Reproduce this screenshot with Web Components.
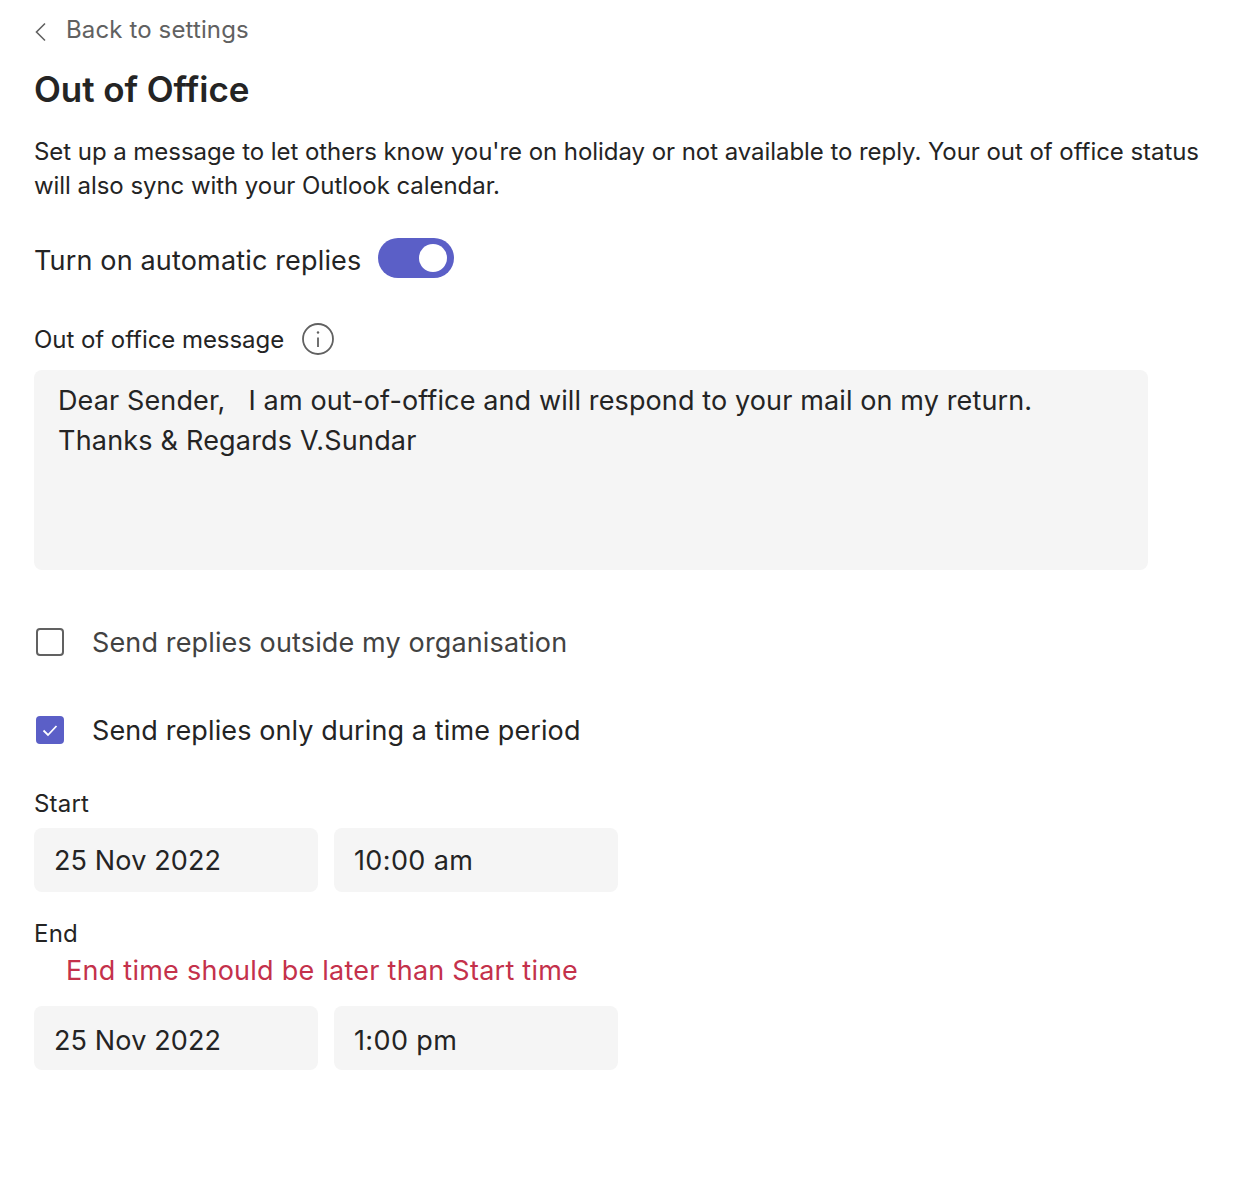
<!DOCTYPE html>
<html lang="en">
<head>
<meta charset="utf-8">
<title>Out of Office</title>
<style>
    html, body {
        margin: 0;
        padding: 0;
        background: #fff;
    }
    body {
        font-family: 'Inter', 'Liberation Sans', sans-serif;
        color: #242424;
    }
</style>
</head>
<body>
<ooo-page></ooo-page>
<script>
class BackLink extends HTMLElement {
    constructor() {
        super();
        this.attachShadow({ mode: "open" }).innerHTML = `
        <style>
            :host {
                display: flex;
                align-items: center;
                height: 60px;
                gap: 19px;
                color: #616161;
                font-size: 24px;
                letter-spacing: 0.13px;
            }
            svg { display: block; margin-top: 3px; }
            span { margin-bottom: 2px; }
        </style>
        <svg width="13" height="20" viewBox="0 0 13 20" fill="none" stroke="#616161" stroke-width="1.6">
            <path d="M11 1.5 L2.5 10 L11 18.5"/>
        </svg>
        <span><slot></slot></span>
       `;
    }
}

class ToggleSwitch extends HTMLElement {
    constructor() {
        super();
        this.attachShadow({ mode: "open" }).innerHTML = `
        <style>
            :host {
                display: flex;
                align-items: center;
                justify-content: flex-end;
                box-sizing: border-box;
                width: 76px;
                height: 40px;
                padding-right: 7px;
                border-radius: 20px;
                background: #5b5fc7;
            }
            div {
                width: 28px;
                height: 28px;
                border-radius: 50%;
                background: #fff;
            }
        </style>
        <div></div>
       `;
    }
}

class CheckRow extends HTMLElement {
    constructor() {
        super();
        const checked = this.hasAttribute("checked");
        this.attachShadow({ mode: "open" }).innerHTML = `
        <style>
            :host {
                display: flex;
                align-items: center;
                gap: 28px;
                padding-left: 2px;
                height: 40px;
                font-size: 27px;
                letter-spacing: ${checked ? "0.11px" : "0.14px"};
                color: ${checked ? "#242424" : "#424242"};
            }
            .box {
                box-sizing: border-box;
                width: 28px;
                height: 28px;
                border-radius: 4px;
                border: 2px solid #616161;
            }
            .box.on {
                border: 0;
                background: #5b5fc7;
            }
            svg { display: block; }
        </style>
        <div class="box ${checked ? "on" : ""}">
            ${checked ? `<svg width="28" height="28" viewBox="0 0 28 28" fill="none" stroke="#fff" stroke-width="1.8"><path d="M7.5 14.5 L12 19 L20.5 10"/></svg>` : ""}
        </div>
        <span><slot></slot></span>
       `;
    }
}

class FieldBox extends HTMLElement {
    constructor() {
        super();
        this.attachShadow({ mode: "open" }).innerHTML = `
        <style>
            :host {
                display: flex;
                align-items: center;
                box-sizing: border-box;
                width: 284px;
                height: 64px;
                padding: 1px 0 0 20px;
                border-radius: 8px;
                background: #f5f5f5;
                font-size: 27px;
                letter-spacing: 0.13px;
                color: #242424;
            }
        </style>
        <slot></slot>
       `;
    }
}

class OooPage extends HTMLElement {
    constructor() {
        super();
        this.attachShadow({ mode: "open" }).innerHTML = `
        <style>
            :host {
                display: block;
                box-sizing: border-box;
                width: 1250px;
                height: 1190px;
                padding-left: 34px;
                font-family: 'Inter', 'Liberation Sans', sans-serif;
                color: #242424;
            }
            h1 {
                margin: 0;
                height: 58px;
                line-height: 58px;
                font-size: 35px;
                font-weight: 600;
                letter-spacing: -0.08px;
            }
            .intro {
                margin: 17px 0 0;
                width: 1190px;
                font-size: 24px;
                letter-spacing: -0.055px;
                line-height: 34px;
            }
            .toggle-row {
                display: flex;
                align-items: center;
                gap: 17px;
                margin-top: 35px;
                height: 40px;
                font-size: 27px;
                letter-spacing: 0.16px;
            }
            .toggle-row span { padding-top: 4px; }
            .msg-label {
                display: flex;
                align-items: center;
                gap: 18px;
                margin-top: 45px;
                height: 32px;
                font-size: 24px;
                letter-spacing: -0.05px;
            }
            .msg-label svg { display: block; }
            .message {
                box-sizing: border-box;
                margin-top: 15px;
                width: 1114px;
                height: 200px;
                padding: 11px 24px 0;
                border-radius: 8px;
                background: #f5f5f5;
                font-size: 27px;
                letter-spacing: 0.12px;
                line-height: 40px;
            }
            .message span { letter-spacing: 0.2px; }
            check-row.first { margin-top: 52px; }
            check-row.second { margin-top: 48px; }
            .label {
                height: 34px;
                line-height: 34px;
                font-size: 24px;
                letter-spacing: 0.2px;
            }
            .label.start { margin-top: 37px; }
            .label.end { margin-top: 25px; }
            .fields {
                display: flex;
                gap: 16px;
                margin-top: 7px;
            }
            .fields field-box:last-child { letter-spacing: 0.38px; }
            .error {
                padding-left: 32px;
                height: 40px;
                line-height: 40px;
                font-size: 27px;
                letter-spacing: 0.25px;
                color: #c4314b;
            }
            .error + .fields { margin-top: 15px; }
            .error + .fields field-box { padding-top: 5px; }
        </style>
        <back-link>Back to settings</back-link>
        <h1>Out of Office</h1>
        <p class="intro">Set up a message to let others know you're on holiday or not available to reply. Your out of office status will also sync with your Outlook calendar.</p>
        <div class="toggle-row"><span>Turn on automatic replies</span><toggle-switch></toggle-switch></div>
        <div class="msg-label">
            <span>Out of office message</span>
            <svg width="32" height="32" viewBox="0 0 32 32" fill="none" stroke="#616161" stroke-width="1.8">
                <circle cx="16" cy="16" r="15"/>
                <path d="M16 14.5 V24"/>
                <circle cx="16" cy="9.5" r="1.2" fill="#616161" stroke="none"/>
            </svg>
        </div>
        <div class="message">Dear Sender, &nbsp; I am out-of-office and will respond to your mail on my return.<br><span>Thanks &amp; Regards V.Sundar</span></div>
        <check-row class="first">Send replies outside my organisation</check-row>
        <check-row class="second" checked>Send replies only during a time period</check-row>
        <div class="label start">Start</div>
        <div class="fields"><field-box>25 Nov 2022</field-box><field-box>10:00 am</field-box></div>
        <div class="label end">End</div>
        <div class="error">End time should be later than Start time</div>
        <div class="fields"><field-box>25 Nov 2022</field-box><field-box>1:00 pm</field-box></div>
       `;
    }
}

customElements.define("back-link", BackLink);
customElements.define("toggle-switch", ToggleSwitch);
customElements.define("check-row", CheckRow);
customElements.define("field-box", FieldBox);
customElements.define("ooo-page", OooPage);
</script>
</body>
</html>
